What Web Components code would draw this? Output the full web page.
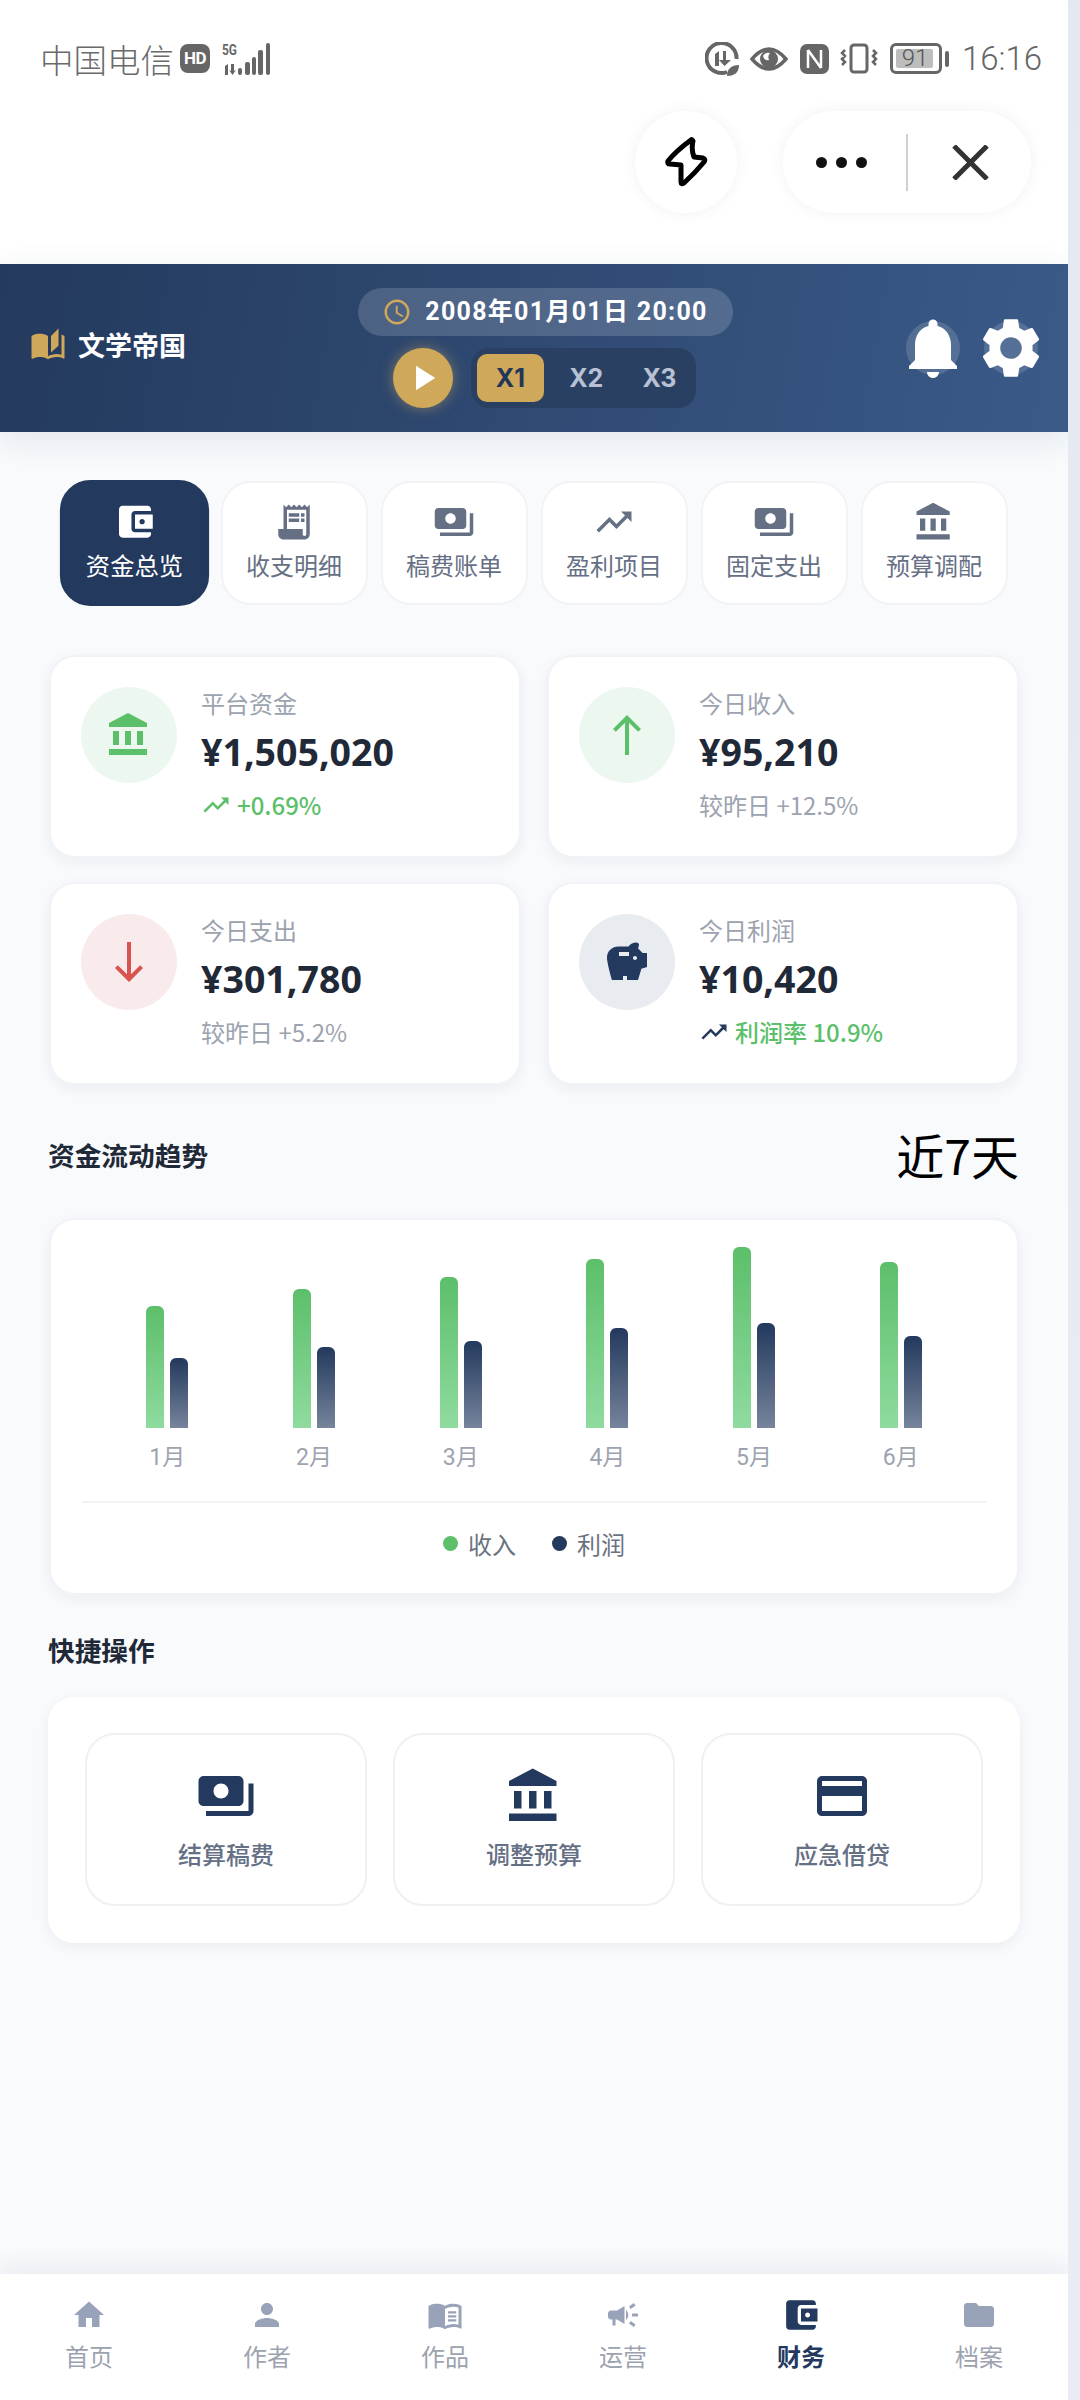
<!DOCTYPE html>
<html lang="zh">
<head>
<meta charset="utf-8">
<title>文学帝国</title>
<style>
html,body{margin:0;padding:0;background:#fff}
body{width:1080px;height:2400px;overflow:hidden;font-family:"Noto Sans CJK SC","Noto Sans",sans-serif;color:#1f2937}
</style>
</head>
<body>
<app-shell>
  <status-bar></status-bar>
  <mini-capsule></mini-capsule>
  <game-header></game-header>
  <tab-row>
    <tab-item icon="wallet" active>资金总览</tab-item>
    <tab-item icon="receipt">收支明细</tab-item>
    <tab-item icon="payments">稿费账单</tab-item>
    <tab-item icon="trending">盈利项目</tab-item>
    <tab-item icon="payments">固定支出</tab-item>
    <tab-item icon="bank">预算调配</tab-item>
  </tab-row>
  <stat-grid>
    <stat-card icon="bank" tone="green" label="平台资金" value="¥1,505,020" sub="+0.69%" subtone="green" trend="#5cbf6a"></stat-card>
    <stat-card icon="up" tone="green" label="今日收入" value="¥95,210" sub="较昨日 +12.5%"></stat-card>
    <stat-card icon="down" tone="red" label="今日支出" value="¥301,780" sub="较昨日 +5.2%"></stat-card>
    <stat-card icon="savings" tone="navy" label="今日利润" value="¥10,420" sub="利润率 10.9%" subtone="green" trend="#23395d"></stat-card>
  </stat-grid>
  <section-title top="39" bottom="34">资金流动趋势<span slot="extra">近7天</span></section-title>
  <trend-chart></trend-chart>
  <section-title top="24" bottom="18">快捷操作</section-title>
  <quick-panel>
    <quick-item icon="payments">结算稿费</quick-item>
    <quick-item icon="bank">调整预算</quick-item>
    <quick-item icon="card">应急借贷</quick-item>
  </quick-panel>
  <bottom-nav slot="nav">
    <nav-item icon="home">首页</nav-item>
    <nav-item icon="person">作者</nav-item>
    <nav-item icon="book">作品</nav-item>
    <nav-item icon="campaign">运营</nav-item>
    <nav-item icon="wallet" active>财务</nav-item>
    <nav-item icon="folder">档案</nav-item>
  </bottom-nav>
</app-shell>
<script>
const P={
wallet:'<path d="M21 18v1c0 1.1-.9 2-2 2H5c-1.11 0-2-.9-2-2V5c0-1.1.89-2 2-2h14c1.1 0 2 .9 2 2v1h-9c-1.11 0-2 .9-2 2v8c0 1.1.89 2 2 2h9zm-9-2h10V8H12v8zm4-2.5c-.83 0-1.5-.67-1.5-1.5s.67-1.5 1.5-1.5 1.5.67 1.5 1.5-.67 1.5-1.5 1.5z"/>',
receipt:'<path d="M19.5 3.5L18 2l-1.5 1.5L15 2l-1.5 1.5L12 2l-1.5 1.5L9 2 7.5 3.5 6 2v14H3v3c0 1.66 1.34 3 3 3h12c1.66 0 3-1.34 3-3V2l-1.5 1.5zM19 19c0 .55-.45 1-1 1s-1-.45-1-1v-3H8V5h11v14z"/><path d="M9 7h6v2H9zM16 7h2v2h-2zM9 10h6v2H9zM16 10h2v2h-2z"/>',
payments:'<path d="M19 14V6c0-1.1-.9-2-2-2H3c-1.1 0-2 .9-2 2v8c0 1.1.9 2 2 2h14c1.1 0 2-.9 2-2zm-9-1c-1.66 0-3-1.34-3-3s1.34-3 3-3 3 1.34 3 3-1.34 3-3 3zm13-6v11c0 1.1-.9 2-2 2H4v-2h17V7h2z"/>',
trending:'<path d="M16 6l2.29 2.29-4.88 4.88-4-4L2 16.59 3.41 18l6-6 4 4 6.3-6.29L22 12V6z"/>',
bank:'<path d="M4 10v7h3v-7H4zm6 0v7h3v-7h-3zM2 22h19v-3H2v3zm14-12v7h3v-7h-3zm-4.5-9L2 6v2h19V6l-9.500-5z"/>',
up:'<path d="M5 9l1.41 1.41L11 5.830V22h2V5.830l4.590 4.580L19 9l-7-7-7 7z"/>',
down:'<path d="M19 15l-1.41-1.41L13 18.170V2h-2v16.170l-4.590-4.580L5 15l7 7 7-7z"/>',
savings:'<path d="M19.83 7.5l-2.27-2.27c.07-.42.18-.81.32-1.15.08-.18.12-.37.12-.58 0-.69-.56-1.25-1.25-1.25-1.64 0-3.09.79-4 2h-5C4.46 4.25 2 6.71 2 9.75c0 3.04 2.5 11.25 2.5 11.25H10v-2h2v2h5.5l1.68-5.59 2.82-.94V7.5h-1.17zM13 9H8V7h5v2zm3 2c-.55 0-1-.45-1-1s.45-1 1-1 1 .45 1 1-.45 1-1 1z"/>',
card:'<path d="M20 4H4c-1.11 0-1.99.89-1.99 2L2 18c0 1.11.89 2 2 2h16c1.11 0 2-.89 2-2V6c0-1.11-.89-2-2-2zm0 14H4v-6h16v6zm0-10H4V6h16v2z"/>',
home:'<path d="M10 20v-6h4v6h5v-8h3L12 3 2 12h3v8z"/>',
person:'<path d="M12 12c2.21 0 4-1.79 4-4s-1.79-4-4-4-4 1.79-4 4 1.79 4 4 4zm0 2c-2.67 0-8 1.34-8 4v2h16v-2c0-2.66-5.33-4-8-4z"/>',
book:'<path d="M21 5c-1.11-.35-2.33-.5-3.5-.5-1.95 0-4.05.4-5.5 1.5-1.45-1.1-3.55-1.5-5.5-1.5S2.45 4.9 1 6v14.65c0 .25.25.5.5.5.1 0 .15-.05.25-.05C3.1 20.45 5.05 20 6.5 20c1.95 0 4.05.4 5.5 1.5 1.35-.85 3.8-1.5 5.5-1.5 1.65 0 3.35.3 4.75 1.05.1.05.15.05.25.05.25 0 .5-.25.5-.5V6c-.6-.45-1.25-.75-2-1zm0 13.5c-1.1-.35-2.3-.5-3.5-.5-1.7 0-4.15.65-5.5 1.5V8c1.35-.85 3.8-1.5 5.5-1.5 1.2 0 2.4.15 3.5.5v11.5z"/><path d="M14 9.5h5.5V11H14zM14 12.2h5.5v1.5H14zM14 14.9h5.5v1.5H14z"/>',
campaign:'<path d="M18 11v2h4v-2h-4zm-2 6.61c.96.71 2.21 1.65 3.2 2.39.4-.53.8-1.07 1.2-1.6-.99-.74-2.24-1.68-3.2-2.4-.4.54-.8 1.08-1.2 1.61zM20.4 5.6c-.4-.53-.8-1.07-1.2-1.6-.99.74-2.24 1.68-3.2 2.4.4.53.8 1.07 1.2 1.6.96-.72 2.21-1.65 3.2-2.4zM4 9c-1.1 0-2 .9-2 2v2c0 1.1.9 2 2 2h1v4h2v-4h1l5 3V6L8 9H4zm11.5 3c0-1.33-.58-2.53-1.5-3.35v6.69c.92-.81 1.5-2.01 1.5-3.34z"/>',
folder:'<path d="M10 4H4c-1.1 0-1.99.9-1.99 2L2 18c0 1.1.9 2 2 2h16c1.1 0 2-.9 2-2V8c0-1.1-.9-2-2-2h-8l-2-2z"/>',
bell:'<path d="M12 22c1.1 0 2-.9 2-2h-4c0 1.1.89 2 2 2zm6-6v-5c0-3.07-1.64-5.64-4.5-6.32V4c0-.83-.67-1.5-1.5-1.5s-1.5.67-1.5 1.5v.68C7.63 5.36 6 7.92 6 11v5l-2 2v1h16v-1l-2-2z"/>',
gear:'<path d="M19.14 12.94c.04-.3.06-.61.06-.94 0-.32-.02-.64-.07-.94l2.03-1.58c.18-.14.23-.41.12-.61l-1.92-3.32c-.12-.22-.37-.29-.59-.22l-2.39.96c-.5-.38-1.03-.7-1.62-.94l-.36-2.54c-.04-.24-.24-.41-.48-.41h-3.84c-.24 0-.43.17-.47.41l-.36 2.54c-.59.24-1.13.57-1.62.94l-2.39-.96c-.22-.08-.47 0-.59.22L2.74 8.87c-.12.21-.08.47.12.61l2.03 1.58c-.05.3-.09.63-.09.94s.02.64.07.94l-2.03 1.58c-.18.14-.23.41-.12.61l1.92 3.32c.12.22.37.29.59.22l2.39-.96c.5.38 1.03.7 1.62.94l.36 2.54c.05.24.24.41.48.41h3.84c.24 0 .44-.17.47-.41l.36-2.54c.59-.24 1.13-.56 1.62-.94l2.39.96c.22.08.47 0 .59-.22l1.92-3.32c.12-.22.07-.47-.12-.61l-2.01-1.58zM12 15.6c-1.98 0-3.6-1.62-3.6-3.6s1.62-3.6 3.6-3.6 3.6 1.62 3.6 3.6-1.62 3.6-3.6 3.6z"/>',
clock:'<path d="M11.99 2C6.47 2 2 6.48 2 12s4.47 10 9.99 10C17.52 22 22 17.52 22 12S17.52 2 11.99 2zM12 20c-4.42 0-8-3.58-8-8s3.58-8 8-8 8 3.58 8 8-3.58 8-8 8zm.5-13H11v6l5.25 3.15.75-1.23-4.5-2.67z"/>',
play:'<path d="M8 5v14l11-7z"/>',
stories:'<path d="M19 1l-5 5v11l5-4.5V1zM1 6v14.65c0 .25.25.5.5.5.1 0 .15-.05.25-.05C3.1 20.45 5.05 20 6.5 20c1.95 0 4.05.4 5.5 1.5V6c-1.45-1.1-3.55-1.5-5.5-1.5S2.45 4.9 1 6zm22 13.5V6c-.6-.45-1.25-.75-2-1v13.5c-1.1-.35-2.3-.5-3.5-.5-1.7 0-4.15.65-5.5 1.5v2c1.35-.85 3.8-1.5 5.5-1.5 1.65 0 3.35.3 4.75 1.05.1.05.15.05.25.05.25 0 .5-.25.5-.5v-1.1z"/>'
};
const ic=(n,s,c)=>`<svg width="${s}" height="${s}" viewBox="0 0 24 24" fill="${c||'currentColor'}" style="display:block;flex:none">${P[n]}</svg>`;
function def(name,html){
  customElements.define(name,class extends HTMLElement{
    constructor(){super();this.attachShadow({mode:'open'});}
    connectedCallback(){
      this.shadowRoot.innerHTML=typeof html==='function'?html(this):html;
    }
  });
}
def('app-shell',`<style>
:host{display:flex;width:1080px;height:2400px;background:#fff}
.app{width:1068px;height:2400px;display:flex;flex-direction:column;background:#f8fafc;position:relative;overflow:hidden}
main{flex:1;display:flex;flex-direction:column;min-height:0}
.bar{width:12px;height:2400px;background:linear-gradient(#e4e9f1,#e9edf3)}
</style><div class="app"><main><slot></slot></main><slot name="nav"></slot></div><div class="bar"></div>`);

def('status-bar',`<style>
:host{display:flex;align-items:center;justify-content:space-between;height:110px;box-sizing:border-box;padding:7px 26px 0 40px;background:#fff;color:#666}
.l,.r{display:flex;align-items:center}
.c{font-size:33.500px;line-height:40px;font-family:"Noto Sans CJK SC",sans-serif;font-weight:300;color:#6a6a6a}
.hd{margin-left:6px;width:30px;height:29px;border-radius:8px;background:#666;color:#fff;font:700 17px/29px "Roboto",sans-serif;text-align:center;letter-spacing:-.5px}
.sig{margin-left:12px;display:block}
.sig text{font:700 15px "Roboto",sans-serif;fill:#666}
.t{font:300 33px/44px "Roboto",sans-serif;color:#666;margin-left:13px;width:80px;white-space:nowrap}
svg{display:block}
.b{position:relative;width:52px;height:31px;box-sizing:border-box;border:3px solid #666;border-radius:6px;margin-left:12px;padding:3px}
.b i{display:block;height:100%;width:92%;background:#bdbdbd;border-radius:2px}
.b span{position:absolute;inset:0;text-align:center;font:300 24px/25px "Roboto",sans-serif;color:#555;padding-right:2px}
.tip{width:4px;height:16px;background:#666;border-radius:2px;margin-left:3px}
</style>
<div class="l"><span class="c">中国电信</span><span class="hd">HD</span>
<svg class="sig" width="50" height="34" viewBox="0 0 50 34"><text x="0" y="13" textLength="15" lengthAdjust="spacingAndGlyphs">5G</text>
<path d="M3 24l3-2v11H3zM9 22h3v7l2-1-3.500 5-3.500-5 2 1z" fill="#666"/>
<g fill="#666"><rect x="16" y="26" width="4" height="7" rx="2"/><rect x="23" y="20" width="5" height="13" rx="2"/><rect x="30" y="15" width="4" height="18" rx="2"/><rect x="36" y="8" width="5" height="25" rx="2"/><rect x="44" y="1" width="4" height="32" rx="2"/></g></svg></div>
<div class="r">
<svg width="34" height="34" viewBox="0 0 34 34"><path d="M22 30A15 15 0 1 1 31.500 17" fill="none" stroke="#666" stroke-width="4"/><path d="M10 12l4-3v15h-4zM18 9h3v9h5l-6.500 6-5.500-6h4z" fill="#666"/><path d="M22 34c0-7 4-11 12-11 0 7-4 11-12 11z" fill="#666"/></svg>
<svg style="margin-left:11px" width="38" height="24" viewBox="0 0 38 24"><path d="M2 12C8 5 13 2 19 2s11 3 17 10c-6 7-11 10-17 10S8 19 2 12z" fill="none" stroke="#666" stroke-width="3.500"/><circle cx="19" cy="12" r="9" fill="#666"/><path d="M13 9a6.500 6.500 0 0 1 7-3c-2 2-2 5-1 7-2 1-5 0-6-4z" fill="#fff"/></svg>
<svg style="margin-left:12px" width="29" height="30" viewBox="0 0 29 30"><rect width="29" height="30" rx="7" fill="#666"/><path d="M8 6v18M8 6l13 18M21 6v18" stroke="#fff" stroke-width="2.500" fill="none"/></svg>
<svg style="margin-left:11px" width="38" height="31" viewBox="0 0 38 31"><rect x="11" y="2" width="16" height="27" rx="3" fill="none" stroke="#666" stroke-width="3"/><path d="M5 7L2 10l3 3-3 3 3 3-3 3M33 7l3 3-3 3 3 3-3 3 3 3" fill="none" stroke="#666" stroke-width="2.500"/></svg>
<div class="b"><i></i><span>91</span></div><div class="tip"></div>
<span class="t">16:16</span>
</div>`);

def('mini-capsule',`<style>
:host{display:flex;justify-content:flex-end;gap:46px;height:154px;padding:1px 37px 0 0;box-sizing:border-box;background:#fff;align-items:flex-start}
.c{height:102px;background:#fff;border-radius:51px;box-shadow:0 0 16px rgba(0,0,0,.06);display:flex;align-items:center;box-sizing:border-box}
.o{width:102px;justify-content:center}
.w{width:248px;padding-left:33px}
.d{width:11px;height:11px;border-radius:50%;background:#111;margin-right:9px}
.s{width:2px;height:57px;background:#d0d0d0;margin:0 44px 0 39px}
</style>
<div class="c o"><svg width="46" height="50" viewBox="0 0 46 50"><path d="M28 3Q13 14 5 24Q4 27 7 27L18 28V45Q18 48 21 46Q32 36 41 25Q43 22 40 21L31 20Q28 12 30 4Q29 2 28 3Z" fill="none" stroke="#000" stroke-width="5" stroke-linejoin="round"/></svg></div>
<div class="c w"><i class="d"></i><i class="d"></i><i class="d" style="margin-right:0"></i><i class="s"></i><svg width="37" height="35" viewBox="0 0 37 35"><path d="M2 1l33 33M35 1L2 34" stroke="#333" stroke-width="5"/></svg></div>`);

def('game-header',`<style>
:host{display:grid;grid-template-columns:1fr 375px 1fr;align-items:center;height:168px;box-sizing:border-box;background:linear-gradient(100deg,#243a5e,#3a5a88);box-shadow:0 8px 30px rgba(30,58,95,.1);position:relative;z-index:1;color:#fff;padding:0 0 0 30px}
.logo{display:flex;align-items:center;gap:12px;font-size:27px;font-weight:700;line-height:36px;margin-top:-6px}
.mid{display:flex;flex-direction:column;align-items:center;gap:12px;width:375px;margin-left:-4px}
.time{width:375px;height:48px;border-radius:24px;background:rgba(255,255,255,.16);display:flex;align-items:center;justify-content:center;gap:13px;font:700 25px/48px "Roboto","Noto Sans CJK SC",sans-serif;letter-spacing:1.300px;white-space:nowrap}
.ctl{display:flex;gap:18px;align-items:center;margin-left:-1px}
.play{width:60px;height:60px;border-radius:50%;background:#cfa85a;box-shadow:0 0 14px rgba(207,168,90,.5);display:flex;align-items:center;justify-content:center;color:#fff}
.sp{width:225px;height:60px;border-radius:18px;background:#2a4062;display:flex;align-items:center;padding-left:6px;box-sizing:border-box;font:700 25px/48px "Inter","Roboto",sans-serif}
.sp b{width:73.500px;text-align:center;color:#b7c1d3;font-weight:700}
.sp b.on{width:67px;margin-right:6px;height:48px;background:#cfa85a;color:#22365a;border-radius:10px}
.r{display:flex;justify-content:flex-end;gap:24px;padding-right:30px}
.bt{width:54px;height:54px;border-radius:50%;background:rgba(255,255,255,.15);display:flex;align-items:center;justify-content:center}
.bt svg{margin:-9px}
</style>
<div class="logo">${ic('stories',36,'#cfa85a')}<span>文学帝国</span></div>
<div class="mid"><div class="time">${ic('clock',30,'#cfa85a')}<span>2008年01月01日 20:00</span></div>
<div class="ctl"><div class="play">${ic('play',42)}</div><div class="sp"><b class="on">X1</b><b>X2</b><b>X3</b></div></div></div>
<div class="r"><div class="bt">${ic('bell',72)}</div><div class="bt">${ic('gear',72)}</div></div>`);

def('tab-row',`<style>
:host{display:flex;gap:13px;justify-content:center;padding:49px 0 50px}
</style><slot></slot>`);
def('tab-item',h=>`<style>
:host{display:flex;flex-direction:column;align-items:center;box-sizing:border-box;width:147px;height:124px;padding-top:18px;background:#fff;border:2px solid #f1f3f6;border-radius:30px;color:#667085;font-size:24px;line-height:34px}
:host([active]){background:#23395d;border-color:#23395d;color:#fff;transform:scale(1.015)}
.i{color:#667085}
:host([active]) .i{color:#fff}
span{margin-top:5px}
</style><div class="i">${ic(h.getAttribute('icon'),42)}</div><span><slot></slot></span>`);

def('stat-grid',`<style>
:host{display:grid;grid-template-columns:472px 472px;gap:24px 26px;justify-content:center}
</style><slot></slot>`);
def('stat-card',h=>{
 const t=h.getAttribute('tone'),cm={green:['#ecf7ef','#5cbf6a'],red:['#f9eaeb','#d9534f'],navy:['#e8ebef','#23395d']}[t];
 const tr=h.getAttribute('trend');
 return `<style>
:host{display:flex;box-sizing:border-box;height:203px;padding:30px;gap:24px;background:#fff;border:2px solid #f1f3f6;border-radius:26px;box-shadow:0 4px 14px rgba(30,58,95,.06)}
.c{width:96px;height:96px;border-radius:50%;background:${cm[0]};display:flex;align-items:center;justify-content:center;flex:none}
.tx{margin-top:-1px}
.l{font-size:24px;line-height:34px;color:#9ca3af}
.v{font:700 37.500px/50px "Noto Sans","Noto Sans CJK SC",sans-serif;color:#1f2937;margin-top:7px}
.s{display:flex;align-items:center;gap:6px;font-size:24px;line-height:34px;color:${h.getAttribute('subtone')==='green'?'#5cbf6a':'#9ca3af'};margin-top:11px;font-weight:${h.getAttribute('subtone')==='green'?500:400}}
</style>
<div class="c">${ic(h.getAttribute('icon'),48,cm[1])}</div>
<div class="tx"><div class="l">${h.getAttribute('label')}</div><div class="v">${h.getAttribute('value')}</div>
<div class="s">${tr?ic('trending',30,tr):''}<span>${h.getAttribute('sub')}</span></div></div>`});

def('section-title',h=>`<style>
:host{display:flex;align-items:center;justify-content:space-between;height:60px;padding:0 49px 0 48px;margin-top:${h.getAttribute('top')}px;margin-bottom:${h.getAttribute('bottom')}px;font-size:26.700px;font-weight:700;color:#1f2937}
::slotted(span){font-size:48px;font-weight:400;color:#000}
</style><slot></slot><slot name="extra"></slot>`);

const D=[[122,70,'1月'],[139,81,'2月'],[151,87,'3月'],[169,100,'4月'],[181,105,'5月'],[166,92,'6月']];
def('trend-chart',`<style>
:host{display:block;box-sizing:border-box;width:970px;height:377px;margin:0 49px;background:#fff;border:2px solid #f1f3f6;border-radius:26px;box-shadow:0 4px 14px rgba(30,58,95,.06);padding:0 31px}
.bars{display:flex;padding:0 12px;height:281px;border-bottom:2px solid #f1f4f7}
.col{flex:1;display:flex;flex-direction:column;align-items:center}
.pl{height:208px;display:flex;align-items:flex-end;gap:6px}
.pl i{width:18px;border-radius:6px 6px 0 0;display:block}
.g{background:linear-gradient(#5cbf6a,#8fdb9f)}
.n{background:linear-gradient(#23395d,#76849c)}
.m{font-size:23px;line-height:34px;color:#9ca3af;margin-top:13px;font-family:"Roboto","Noto Sans CJK SC",sans-serif}
.leg{display:flex;justify-content:center;align-items:center;gap:36px;height:80px;font-size:24px;color:#6b7280}
.leg div{display:flex;align-items:center;gap:10px}
.leg i{width:15px;height:15px;border-radius:50%}
</style>
<div class="bars">${D.map(d=>`<div class="col"><div class="pl"><i class="g" style="height:${d[0]}px"></i><i class="n" style="height:${d[1]}px"></i></div><div class="m">${d[2]}</div></div>`).join('')}</div>
<div class="leg"><div><i style="background:#5cbf6a"></i>收入</div><div><i style="background:#23395d"></i>利润</div></div>`);

def('quick-panel',`<style>
:host{display:flex;gap:26px;box-sizing:border-box;width:972px;height:246px;margin:0 48px;padding:36px 37px;background:#fff;border-radius:26px;box-shadow:0 4px 14px rgba(30,58,95,.06)}
</style><slot></slot>`);
def('quick-item',h=>`<style>
:host{flex:1;display:flex;flex-direction:column;align-items:center;box-sizing:border-box;height:173px;padding-top:31px;border:2px solid #eef0f3;border-radius:30px;color:#23395d}
span{font-size:24px;line-height:34px;color:#667085;font-weight:500;margin-top:11px}
</style>${ic(h.getAttribute('icon'),60)}<span><slot></slot></span>`);

def('bottom-nav',`<style>
:host{display:flex;height:126px;background:#fff;box-shadow:0 -6px 24px rgba(30,58,95,.08);position:relative}
</style><slot></slot>`);
def('nav-item',h=>`<style>
:host{flex:1;display:flex;flex-direction:column;align-items:center;padding-top:23px;color:#98a2b8;font-size:24px;line-height:34px}
:host([active]){color:#23395d}
span{color:#9ca3af;margin-top:6px}
:host([active]) span{color:#23395d;font-weight:700}
:host([active]) svg{transform:scale(1.1)}
</style>${ic(h.getAttribute('icon'),36)}<span><slot></slot></span>`);
</script>
</body>
</html>
